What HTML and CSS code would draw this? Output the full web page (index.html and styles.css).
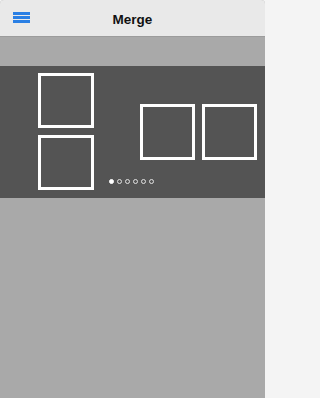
FILE: index.html
```html
<!DOCTYPE html>
<html>
<head>
<meta charset="utf-8">
<link rel="stylesheet" href="styles.css">
</head>
<body>
<div class="app">
  <header class="navbar">
    <div class="menu-btn"><span></span><span></span><span></span></div>
    <h1 class="title">Merge</h1>
  </header>
  <div class="toolbar"></div>
  <section class="carousel">
    <div class="col">
      <div class="tile"></div>
      <div class="tile"></div>
    </div>
    <div class="pair">
      <div class="tile small"></div>
      <div class="tile small"></div>
    </div>
    <div class="dots">
      <span class="dot on"></span><span class="dot"></span><span class="dot"></span><span class="dot"></span><span class="dot"></span><span class="dot"></span>
    </div>
  </section>
  <div class="rest"></div>
</div>
</body>
</html>
```
FILE: styles.css
```css
html, body {
  margin: 0;
  padding: 0;
  background: #f4f4f4;
}
.app {
  width: 265px;
  height: 398px;
  display: flex;
  flex-direction: column;
  background: #a9a9a9;
  border-radius: 4px 4px 0 0;
  overflow: hidden;
  font-family: "Liberation Sans", Arial, sans-serif;
}
.navbar {
  position: relative;
  height: 36px;
  flex: none;
  background: #e9e9e9;
  border-bottom: 1px solid #9c9c9c;
  display: flex;
  align-items: center;
  justify-content: center;
}
.menu-btn {
  position: absolute;
  left: 13px;
  top: 12px;
  width: 17px;
  display: flex;
  flex-direction: column;
  gap: 1.5px;
}
.menu-btn span {
  display: block;
  height: 2.5px;
  background: #2a7fe4;
}
.title {
  margin: 2px 0 0 0;
  font-size: 13.5px;
  font-weight: bold;
  color: #111;
}
.toolbar {
  height: 29px;
  flex: none;
  background: #a9a9a9;
}
.carousel {
  position: relative;
  height: 132px;
  flex: none;
  background: #545454;
  display: flex;
  padding-left: 38px;
  box-sizing: border-box;
}
.col {
  display: flex;
  flex-direction: column;
  gap: 7px;
  padding-top: 7px;
}
.tile {
  width: 56px;
  height: 55px;
  border: 3px solid #fff;
  box-sizing: border-box;
}
.pair {
  display: flex;
  gap: 7px;
  margin-left: 46px;
  margin-top: 38px;
  align-self: flex-start;
}
.tile.small {
  width: 55px;
  height: 56px;
}
.dots {
  position: absolute;
  left: 109px;
  top: 113px;
  display: flex;
  gap: 3px;
}
.dot {
  width: 5px;
  height: 5px;
  border-radius: 50%;
  border: 1px solid #e0e0e0;
  box-sizing: border-box;
}
.dot.on {
  background: #fff;
  border-color: #fff;
}
.rest {
  flex: 1;
  background: #a9a9a9;
}
```
